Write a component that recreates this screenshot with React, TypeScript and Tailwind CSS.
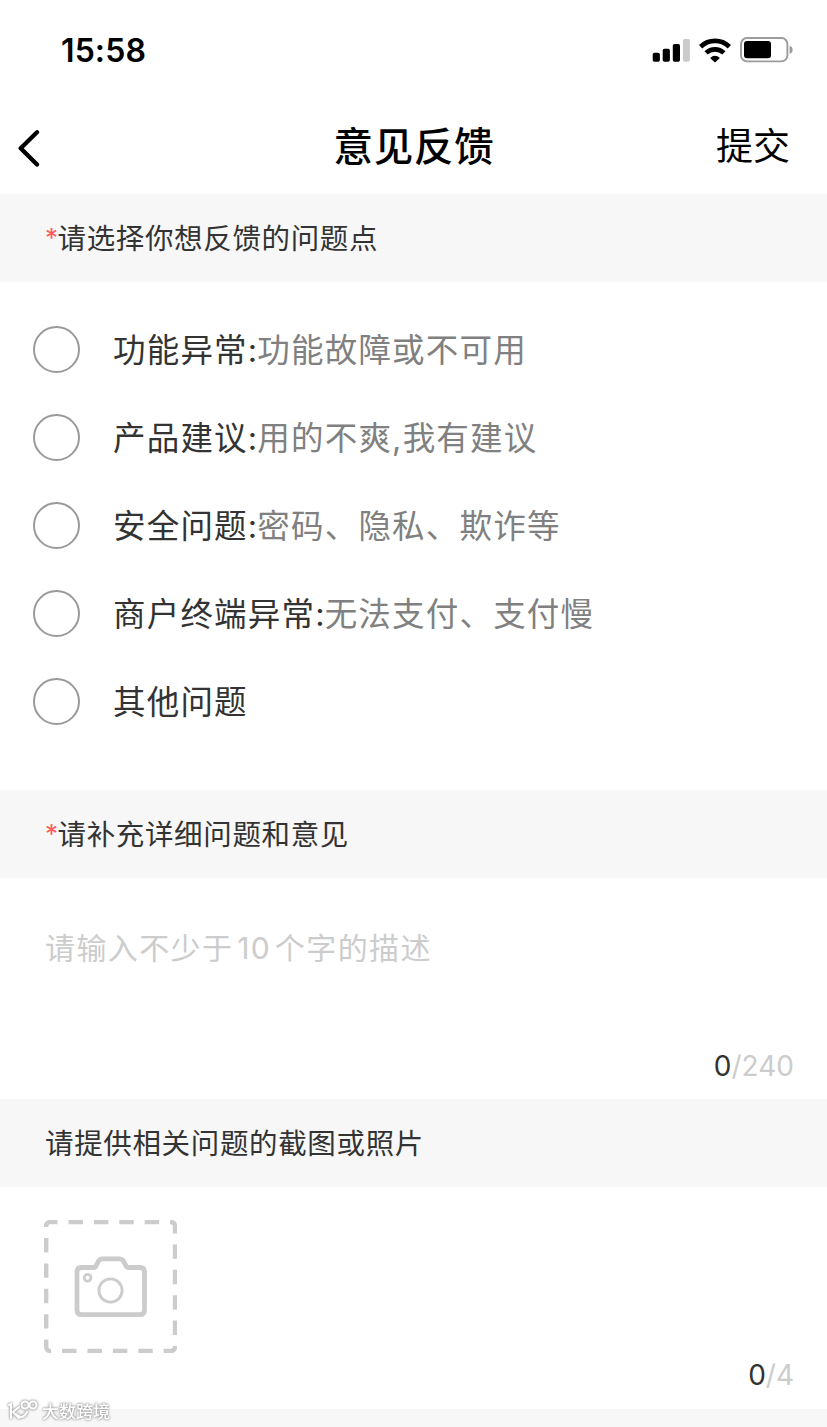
import { useState } from "react";

const options = [
  { label: "功能异常", hint: "功能故障或不可用" },
  { label: "产品建议", hint: "用的不爽,我有建议" },
  { label: "安全问题", hint: "密码、隐私、欺诈等" },
  { label: "商户终端异常", hint: "无法支付、支付慢" },
  { label: "其他问题" },
];

const SignalIcon = () => (
  <svg width="38" height="24" viewBox="0 0 38 24">
    <rect x="0.7" y="14.7" width="7.2" height="9" rx="1.8" />
    <rect x="10.7" y="10.8" width="7.2" height="12.9" rx="1.8" />
    <rect x="20.8" y="6" width="7.2" height="17.7" rx="1.8" />
    <rect x="30.9" y="1" width="7" height="22.7" rx="1.8" fill="#cbcbcb" />
  </svg>
);

const WifiIcon = () => (
  <svg width="32" height="25" viewBox="0 0 32 25">
    <g fill="none" stroke="#000" strokeWidth="4.7">
      <path d="M1.6 8.7a20.6 20.6 0 0 1 28.8 0" />
      <path d="M7.1 14.9a12.8 12.8 0 0 1 17.8 0" />
    </g>
    <path d="M16 24.4l-4.9-4.5q4.9-4.2 9.8 0z" />
  </svg>
);

const BatteryIcon = () => (
  <svg width="53" height="26" viewBox="0 0 53 26">
    <rect x="1" y="1" width="46.4" height="23.4" rx="6" fill="none" stroke="#9b9b9b" strokeWidth="1.9" />
    <rect x="4" y="4" width="27" height="17.3" rx="3" />
    <path d="M49.6 8.8q3 1 3 4t-3 4z" fill="#9b9b9b" />
  </svg>
);

const CameraIcon = () => (
  <svg width="133" height="133" viewBox="0 0 133 133" fill="none" stroke="#cccccc">
    {/* Dashed frame */}
    <path
      d="M2.2 7V6a4 4 0 0 1 4-4H127a4 4 0 0 1 4 4V127a4 4 0 0 1-4 4H6.2a4 4 0 0 1-4-4V7"
      pathLength="500"
      strokeDasharray="14.2 10.8"
      strokeWidth="4.4"
    />
    {/* Camera body */}
    <path
      d="M36 47.5H49.5Q51.5 47.5 52.5 45L54.5 41Q56 38.8 58.5 38.8H75Q78 38.8 79.5 41L81.5 45Q82.5 47.5 85 47.5H96Q100.5 47.5 100.5 52V90Q100.5 94.7 96 94.7H37.5Q33 94.7 33 90V52Q33 47.5 37.5 47.5"
      strokeWidth="4.8"
      strokeLinejoin="round"
    />
    <circle cx="66.5" cy="70.5" r="11.6" strokeWidth="2.9" />
    <circle cx="43.6" cy="57.8" r="3.4" strokeWidth="2.7" />
  </svg>
);

const SectionTitle = ({ text, required = false }: { text: string; required?: boolean }) => (
  <h2 className="flex h-[88px] items-center bg-[#f7f7f7] pl-[45px] pt-[2px] text-[28.5px] tracking-[0.65px] text-[#333]">
    {required && (
      <span className="w-[12.5px] pb-[3px] text-[26px] leading-none tracking-normal text-[#ff5b5b]">*</span>
    )}
    {text}
  </h2>
);

const Watermark = () => (
  <div className="absolute bottom-0 left-2 flex h-8 items-center gap-1 text-white [filter:drop-shadow(0_0_1px_#999)_drop-shadow(0_0_1px_#bbb)]">
    <svg width="30" height="24" viewBox="0 0 30 24" fill="none" stroke="#fff" strokeWidth="2" strokeLinecap="round">
      <path d="M1 6l2-1v14M11 8l-6 5 6 6M8 15q6 7 11-2" />
      <circle cx="17" cy="6" r="3.5" />
      <circle cx="25" cy="6" r="3.5" />
    </svg>
    <span className="pt-[2px] text-[17px] font-medium leading-none">大数跨境</span>
  </div>
);

const App = () => {
  const [selected, setSelected] = useState<number | null>(null);
  const [content, setContent] = useState("");

  return (
    <div className="relative flex h-[1427px] w-[827px] flex-col overflow-hidden bg-white font-['Inter','Noto_Sans_CJK_SC',sans-serif] text-[#333]">
      {/* Status bar */}
      <div className="flex h-[100px] items-center justify-between pl-[61px] pr-[33px] text-black">
        <span className="pt-[2px] text-[32px] font-semibold tracking-[0.1px]">15:58</span>
        <div className="flex items-center gap-[9px] pr-[1px]">
          <SignalIcon />
          <WifiIcon />
          <BatteryIcon />
        </div>
      </div>

      {/* Nav bar */}
      <header className="grid h-[94px] grid-cols-3 items-center pl-[17px] pr-[37px] text-black">
        <button aria-label="返回" className="justify-self-start pt-[2px]">
          <svg width="24" height="38" viewBox="0 0 24 38" fill="none" stroke="#000" strokeWidth="4.3" strokeLinecap="round" strokeLinejoin="round">
            <path d="M20 3.2L3.7 19.2L20 35.6" />
          </svg>
        </button>
        <h1 className="justify-self-center whitespace-nowrap pl-[21px] text-[39.5px] font-medium leading-[56px] tracking-[0.7px]">意见反馈</h1>
        <button className="justify-self-end text-[37px]">提交</button>
      </header>

      <SectionTitle text="请选择你想反馈的问题点" required />
      <div className="flex h-[508px] flex-col pt-[23px]">
        {options.map((item, i) => (
          <button
            key={item.label}
            onClick={() => setSelected(i)}
            className="flex h-[88.2px] items-center gap-[33px] pl-[33px] text-left text-[32.5px] tracking-[1.2px]"
          >
            <span className={`size-[47px] rounded-full border-2 ${selected === i ? "border-[#333] bg-[#333]" : "border-[#999]"}`} />
            <span className="pt-[4px]">
              {item.label}
              {item.hint && <><span className="tracking-[0.1px]">:</span><span className="text-[#808080]">{item.hint}</span></>}
            </span>
          </button>
        ))}
      </div>

      <SectionTitle text="请补充详细问题和意见" required />
      <div className="flex h-[221px] flex-col pl-[45px] pr-[33px] pt-[47px]">
        <textarea
          value={content}
          maxLength={240}
          onChange={(e) => setContent(e.target.value)}
          placeholder="请输入不少于10个字的描述"
          className="h-[117px] resize-none text-[30px] leading-[46px] tracking-[1.4px] outline-none [text-autospace:normal] placeholder:text-[#ccc]"
        />
        <div className="text-right text-[28px] leading-[48px] text-[#ccc]">
          <span className="text-[#333]">{content.length}</span>/240
        </div>
      </div>

      <SectionTitle text="请提供相关问题的截图或照片" />
      <div className="flex h-[222px] flex-col pl-[44px] pr-[33px] pt-[33px]">
        <button aria-label="添加照片" className="self-start">
          <CameraIcon />
        </button>
        <div className="text-right text-[28px] leading-[44px] text-[#ccc]">
          <span className="text-[#333]">0</span>/4
        </div>
      </div>
      <div className="flex-1 bg-[#f7f7f7]" />

      <Watermark />
    </div>
  );
};

export default App;
